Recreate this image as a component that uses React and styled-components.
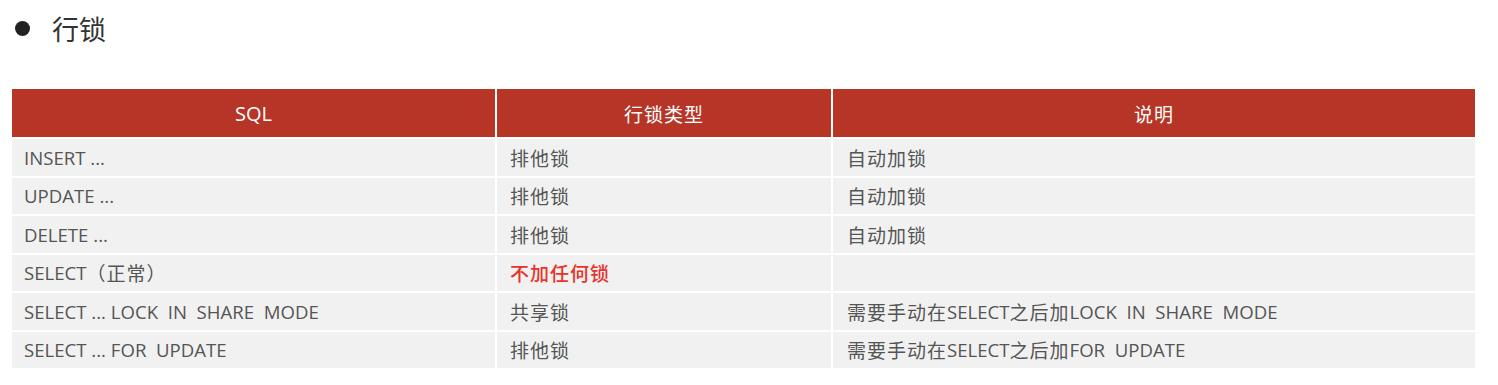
import React from "react";
import styled, { createGlobalStyle } from "styled-components";

const Global = createGlobalStyle`
  html, body { margin: 0; padding: 0; background: #ffffff; }
  body { font-family: "Open Sans", "Noto Sans CJK SC", sans-serif; }
`;

const Page = styled.div`
  width: 1498px;
  height: 385px;
  padding: 11px 0 0 12px;
  box-sizing: border-box;
  background: #fff;
`;

const Title = styled.div`
  display: flex;
  align-items: center;
  gap: 22px;
  height: 34px;
  padding-left: 3px;
  font-family: "Noto Sans CJK SC", sans-serif;
  font-size: 27px;
  color: #333;
`;

const Dot = styled.span`
  width: 15px;
  height: 15px;
  border-radius: 50%;
  background: #222;
  flex: none;
`;

const Table = styled.div`
  margin-top: 44px;
  display: grid;
  grid-template-columns: 483px 334px 642px;
  grid-template-rows: 48px repeat(6, 36.5px);
  column-gap: 2px;
  row-gap: 2px;
  width: 1463px;
`;

const Head = styled.div`
  background: #b73526;
  color: #fff;
  display: flex;
  align-items: center;
  justify-content: center;
  font-family: "Open Sans", "Noto Sans CJK SC", sans-serif;
  font-size: 20px;
`;

const Cell = styled.div`
  background: #f1f1f1;
  color: ${(p) => (p.$red ? "#e8342a" : "#555")};
  font-weight: ${(p) => (p.$red ? 500 : 400)};
  display: flex;
  align-items: center;
  padding-left: ${(p) => p.$pad || 12}px;
  font-size: 18.6px;
  white-space: pre;
`;

const Cjk = styled.span`
  font-family: "Noto Sans CJK SC", sans-serif;
  font-size: 19px;
  letter-spacing: 1px;
`;

const rows = [
  [["INSERT ..."], [<Cjk key="a">排他锁</Cjk>], [<Cjk key="b">自动加锁</Cjk>]],
  [["UPDATE ..."], [<Cjk key="a">排他锁</Cjk>], [<Cjk key="b">自动加锁</Cjk>]],
  [["DELETE ..."], [<Cjk key="a">排他锁</Cjk>], [<Cjk key="b">自动加锁</Cjk>]],
  [["SELECT", <Cjk key="c">（正常）</Cjk>], [<Cjk key="a">不加任何锁</Cjk>], [""], true],
  [
    ["SELECT ... LOCK  IN  SHARE  MODE"],
    [<Cjk key="a">共享锁</Cjk>],
    [<Cjk key="b">需要手动在</Cjk>, "SELECT", <Cjk key="d">之后加</Cjk>, "LOCK  IN  SHARE  MODE"],
  ],
  [
    ["SELECT ... FOR  UPDATE"],
    [<Cjk key="a">排他锁</Cjk>],
    [<Cjk key="b">需要手动在</Cjk>, "SELECT", <Cjk key="d">之后加</Cjk>, "FOR  UPDATE"],
  ],
];

export default function App() {
  return (
    <Page>
      <Global />
      <Title>
        <Dot />
        <span>行锁</span>
      </Title>
      <Table>
        <Head>SQL</Head>
        <Head>
          <Cjk>行锁类型</Cjk>
        </Head>
        <Head>
          <Cjk>说明</Cjk>
        </Head>
        {rows.map((r, i) => (
          <React.Fragment key={i}>
            <Cell $pad={12}>{r[0]}</Cell>
            <Cell $pad={13} $red={r[3]}>{r[1]}</Cell>
            <Cell $pad={14}>{r[2]}</Cell>
          </React.Fragment>
        ))}
      </Table>
    </Page>
  );
}
